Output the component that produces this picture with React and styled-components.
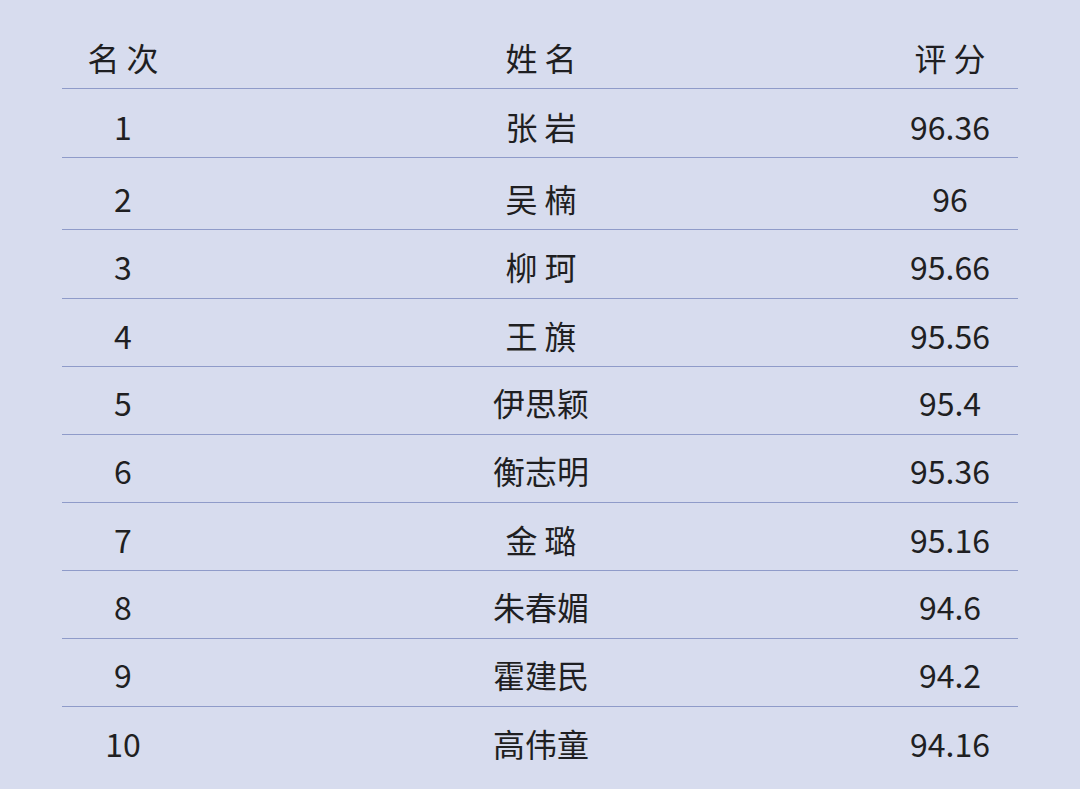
import React from "react";
import styled, { createGlobalStyle } from "styled-components";

const GlobalStyle = createGlobalStyle`
  html, body {
    margin: 0;
    padding: 0;
    background: #d7dcee;
  }
`;

const Page = styled.div`
  min-height: 789px;
  background: #d7dcee;
  padding: 0 62px;
  box-sizing: border-box;
  font-family: "Noto Sans CJK SC", "Noto Sans", sans-serif;
  color: #1f1f22;
`;

const Row = styled.div`
  display: grid;
  grid-template-columns: 122px 714px 1fr;
  height: ${(p) => p.$h}px;
  box-sizing: border-box;
  padding-top: ${(p) => p.$top}px;
  border-bottom: ${(p) => (p.$last ? "none" : "1.5px solid #8f9bc9")};
  font-size: 32px;
  line-height: 32px;
`;

const Cell = styled.div`
  text-align: center;
  white-space: pre;
  padding-right: ${(p) => (p.$score ? "16px" : "0")};
`;

const rows = [
  ["1", "张 岩", "96.36"],
  ["2", "吴 楠", "96"],
  ["3", "柳 珂", "95.66"],
  ["4", "王 旗", "95.56"],
  ["5", "伊思颖", "95.4"],
  ["6", "衡志明", "95.36"],
  ["7", "金 璐", "95.16"],
  ["8", "朱春媚", "94.6"],
  ["9", "霍建民", "94.2"],
  ["10", "高伟童", "94.16"],
];

const heights = [69, 72, 69, 68, 68, 68, 68, 68, 68, 82];
const tops = [21, 24, 20, 20, 19, 19, 20, 19, 19, 20];

export default function App() {
  return (
    <>
      <GlobalStyle />
      <Page>
        <Row $h={89} $top={41}>
          <Cell>名 次</Cell>
          <Cell>姓 名</Cell>
          <Cell $score>评 分</Cell>
        </Row>
        {rows.map(([rank, name, score], i) => (
          <Row key={rank} $h={heights[i]} $top={tops[i]} $last={i === rows.length - 1}>
            <Cell>{rank}</Cell>
            <Cell>{name}</Cell>
            <Cell $score>{score}</Cell>
          </Row>
        ))}
      </Page>
    </>
  );
}
